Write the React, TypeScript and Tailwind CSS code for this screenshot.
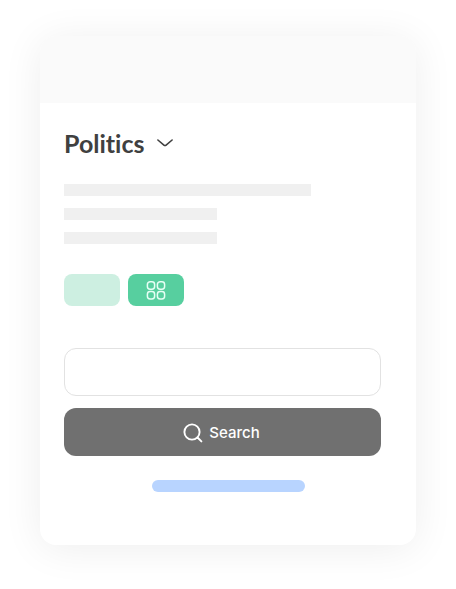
function ChevronIcon() {
  return (
    <svg
      className="pointer-events-none absolute top-3 right-0 h-2 w-4"
      viewBox="0 0 16 8"
      fill="none"
      stroke="currentColor"
      strokeWidth="1.6"
      strokeLinecap="round"
      strokeLinejoin="round"
      aria-hidden="true"
    >
      <path d="M0.9 1 L6.9 6.1 Q8 7 9.1 6.1 L15.1 1" />
    </svg>
  );
}

function GridIcon() {
  return (
    <svg className="h-5 w-5" viewBox="0 0 20 20" fill="none" stroke="currentColor" strokeWidth="1.5" aria-hidden="true">
      <rect x="1.4" y="1.8" width="7.2" height="7.4" rx="2.7" />
      <rect x="11.4" y="1.8" width="7.2" height="7.4" rx="2.7" />
      <rect x="1.4" y="11.6" width="7.2" height="7.4" rx="2.7" />
      <rect x="11.4" y="11.6" width="7.2" height="7.4" rx="2.7" />
    </svg>
  );
}

function SearchIcon() {
  return (
    <svg
      className="h-5 w-5"
      viewBox="0 0 20 20"
      fill="none"
      stroke="currentColor"
      strokeWidth="1.9"
      strokeLinecap="round"
      aria-hidden="true"
    >
      <circle cx="9" cy="9" r="7.6" />
      <path d="M14.5 14.5 L18.4 18.4" />
    </svg>
  );
}

export default function App() {
  return (
    <div className="bg-white px-10 pt-9 pb-11 font-['Lato','Noto_Sans',sans-serif] text-[#404040]">
      <main className="overflow-hidden rounded-2xl bg-white shadow-[0_4px_40px_rgba(0,0,0,0.07)]">
        <header className="h-[67px] bg-[#fafafa]" />
        <div className="pt-6 pr-[35px] pl-6">
          <div className="relative w-fit">
            <select
              aria-label="Topic"
              className="block h-8 appearance-none bg-transparent pr-7 text-[25px] leading-8 font-bold [field-sizing:content] [font-variant-ligatures:none]"
            >
              <option>Politics</option>
            </select>
            <ChevronIcon />
          </div>

          <div className="mt-[25px] flex flex-col gap-3">
            <div className="h-3 w-[78%] bg-[#f0f0f0]" />
            <div className="h-3 w-[153px] bg-[#f0f0f0]" />
            <div className="h-3 w-[153px] bg-[#f0f0f0]" />
          </div>

          <div className="mt-[30px] flex gap-2">
            <button type="button" aria-label="List view" className="h-8 w-14 rounded-lg bg-[#cdefe1]" />
            <button
              type="button"
              aria-label="Grid view"
              className="flex h-8 w-14 items-center justify-center rounded-lg bg-[#57cf9f] text-[#e6fff5]"
            >
              <GridIcon />
            </button>
          </div>

          <form className="mt-[42px] flex flex-col gap-3" onSubmit={(event) => event.preventDefault()}>
            <input
              type="text"
              aria-label="Search terms"
              className="h-12 w-full rounded-xl border border-[#e2e2e2] bg-white px-4 text-base outline-none"
            />
            <button
              type="submit"
              className="flex h-12 w-full items-center justify-center gap-1.5 rounded-xl bg-[#707070] pt-0.5 pr-0.5 font-['Inter','Noto_Sans',sans-serif] text-[15px] font-medium text-white"
            >
              <SearchIcon />
              Search
            </button>
          </form>
        </div>

        <div className="mx-auto mt-6 mb-[53px] h-3 w-[153px] rounded-full bg-[#b8d4ff]" />
      </main>
    </div>
  );
}
